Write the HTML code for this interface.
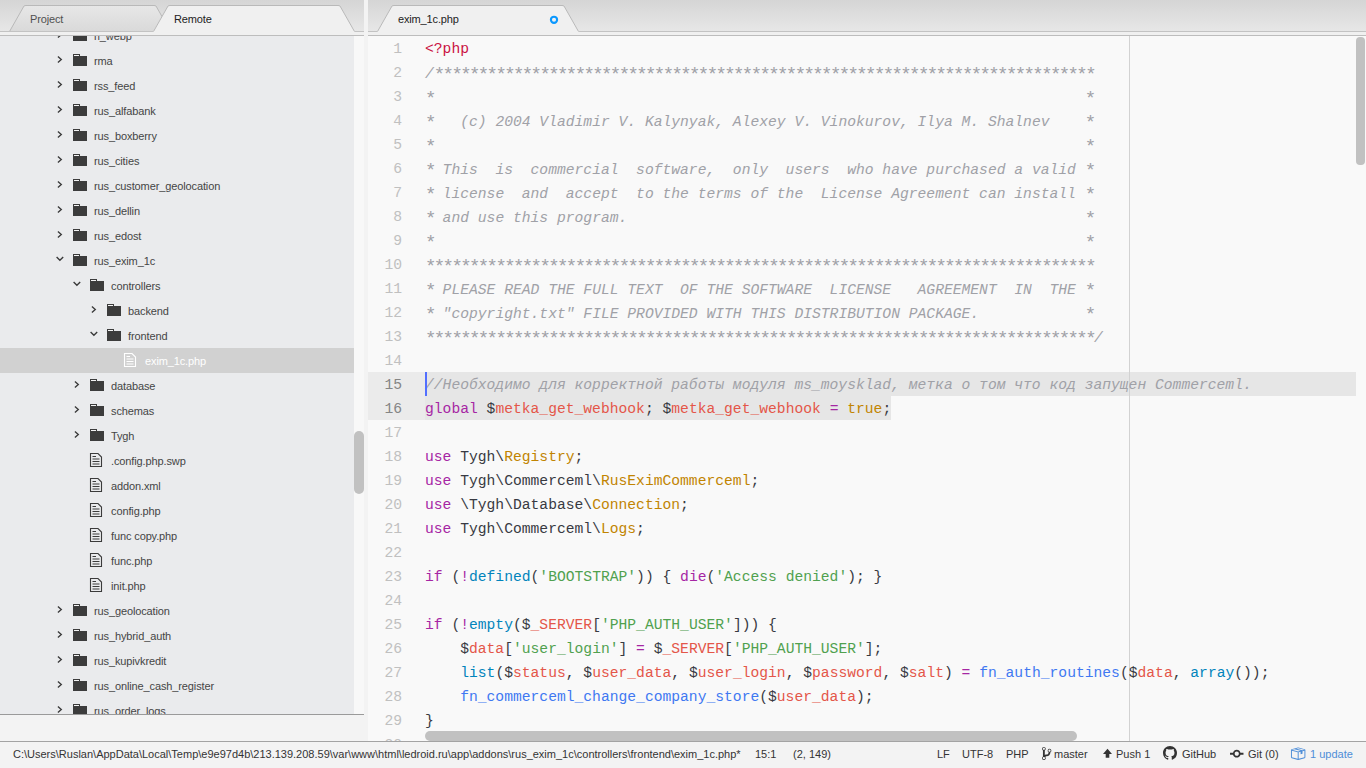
<!DOCTYPE html><html><head><meta charset="utf-8"><style>
*{margin:0;padding:0;box-sizing:border-box}
html,body{width:1366px;height:768px;overflow:hidden;background:#f3f3f3;font-family:"Liberation Sans",sans-serif}
.tabbar{position:absolute;top:0;height:36px;background:linear-gradient(#d5d5d5,#e7e7e7 31px);overflow:hidden}
.tabbar .bl{position:absolute;left:0;right:0;top:31px;height:1px;background:#c3c3c3}
.tabbar .strip{position:absolute;left:0;right:0;top:32px;height:3px;background:#f0f0f0}
.tabbar .bb{position:absolute;left:0;right:0;top:35px;height:1px;background:#bdbdbd}
svg{position:absolute;overflow:visible}
.tt{position:absolute;top:13px;font-size:11px;line-height:13px;color:#222;white-space:pre;letter-spacing:-0.15px}
#tree{position:absolute;left:0;top:36px;width:354px;height:678px;background:#eaebed;overflow:hidden}
.row{position:absolute;left:0;width:354px;height:25px;font-size:11px;color:#454545;white-space:pre}
.row .n{position:absolute;top:7px;line-height:13px;letter-spacing:-0.12px}
.row.sel{background:#d1d1d1;color:#fff}
#tscroll{position:absolute;left:354px;top:36px;width:10px;height:678px;background:#f8f8f8}
#tthumb{position:absolute;left:354.2px;top:430.5px;width:9.4px;height:63px;background:#c1c1c1;border-radius:5px}
#tbot{position:absolute;left:0;top:714px;width:364px;height:1px;background:#9a9a9a}
#divider{position:absolute;left:364px;top:0;width:4px;height:741px;background:#f3f3f3}
#editor{position:absolute;left:368px;top:36px;width:998px;height:705px;background:#f9f9f9;overflow:hidden;font-family:"Liberation Mono",monospace;font-size:14.667px}
.ln{position:absolute;left:0;width:34px;text-align:right;height:24px;line-height:24px;color:#c0c0c0}
.ln.hl{color:#858585}
.cl{position:absolute;left:57px;height:24px;line-height:24px;white-space:pre;color:#383a42}
.c{color:#a0a1a7;font-style:italic}
.ast{font-size:19px;letter-spacing:-2.6px;position:relative;top:2px;font-style:normal;margin-left:0px}
.k{color:#a626a4}
.v{color:#e45649}
.s{color:#50a14f}
.f{color:#4078f2}
.b{color:#0184bc}
.o{color:#c18401}
.p{color:#ca1243}
#status{position:absolute;left:0;top:741px;width:1366px;height:27px;background:#f3f3f3;border-top:1px solid #a3a3a3;font-size:11px;color:#333;white-space:pre}
#status .si{position:absolute;top:6px;line-height:13px;letter-spacing:0px}
</style></head><body>
<div class="tabbar" style="left:0;width:364px"><div class="bl"></div><div class="strip"></div><div class="bb"></div>
<svg width="364" height="36" style="left:0;top:0"><defs><linearGradient id="gp" x1="0" y1="0" x2="0" y2="1"><stop offset="0" stop-color="#e7e7e7"/><stop offset="1" stop-color="#d9d9d9"/></linearGradient></defs><path d="M8.9,32 L24,6 Q24.8,5.5 26,5.5 L154,5.5 Q155.2,5.5 156,6 L171.1,32 Z" fill="url(#gp)" stroke="none"/><path d="M9.5,31.5 L24,6 Q24.8,5.5 26,5.5 L154,5.5 Q155.2,5.5 156,6 L170.5,31.5" fill="none" stroke="#b9b9b9" stroke-width="1"/><rect x="0" y="31" width="364" height="1" fill="#c3c3c3"/><path d="M152.9,32 L168,6 Q168.8,5.5 170,5.5 L338,5.5 Q339.2,5.5 340,6 L355.1,32 Z" fill="#f0f0f0" stroke="none"/><path d="M153.5,31.5 L168,6 Q168.8,5.5 170,5.5 L338,5.5 Q339.2,5.5 340,6 L354.5,31.5" fill="none" stroke="#b9b9b9" stroke-width="1"/></svg>
<div class="tt" style="left:30px;color:#505050">Project</div>
<div class="tt" style="left:174px">Remote</div>
</div>
<div id="divider"></div>
<div class="tabbar" style="left:368px;width:998px"><div class="bl"></div><div class="strip"></div><div class="bb"></div>
<svg width="998" height="36" style="left:0;top:0"><path d="M8.9,32 L24,6 Q24.8,5.5 26,5.5 L194,5.5 Q195.2,5.5 196,6 L211.1,32 Z" fill="#f0f0f0" stroke="none"/><path d="M9.5,31.5 L24,6 Q24.8,5.5 26,5.5 L194,5.5 Q195.2,5.5 196,6 L210.5,31.5" fill="none" stroke="#b9b9b9" stroke-width="1"/><circle cx="186" cy="19.8" r="3.1" fill="none" stroke="#0a98ff" stroke-width="2.1"/></svg>
<div class="tt" style="left:30px">exim_1c.php</div>
</div>
<div id="tree">
<div class="row" style="top:-13px">
<svg width="10" height="10" style="left:57px;top:8px"><path d="M0.9,0.6 L4.3,3.6 L0.9,6.6" fill="none" stroke="#3a3a3a" stroke-width="1.35"/></svg>
<svg width="14" height="12" style="left:73px;top:6px"><path d="M0,2 H14 V12 H0 Z M0,0 H7 V2 H0 Z" fill="#3c3c3c"/><rect x="1" y="1" width="5" height="1" fill="#f4f4f4"/></svg>
<span class="n" style="left:94px">ri_webp</span></div>
<div class="row" style="top:12px">
<svg width="10" height="10" style="left:57px;top:8px"><path d="M0.9,0.6 L4.3,3.6 L0.9,6.6" fill="none" stroke="#3a3a3a" stroke-width="1.35"/></svg>
<svg width="14" height="12" style="left:73px;top:6px"><path d="M0,2 H14 V12 H0 Z M0,0 H7 V2 H0 Z" fill="#3c3c3c"/><rect x="1" y="1" width="5" height="1" fill="#f4f4f4"/></svg>
<span class="n" style="left:94px">rma</span></div>
<div class="row" style="top:37px">
<svg width="10" height="10" style="left:57px;top:8px"><path d="M0.9,0.6 L4.3,3.6 L0.9,6.6" fill="none" stroke="#3a3a3a" stroke-width="1.35"/></svg>
<svg width="14" height="12" style="left:73px;top:6px"><path d="M0,2 H14 V12 H0 Z M0,0 H7 V2 H0 Z" fill="#3c3c3c"/><rect x="1" y="1" width="5" height="1" fill="#f4f4f4"/></svg>
<span class="n" style="left:94px">rss_feed</span></div>
<div class="row" style="top:62px">
<svg width="10" height="10" style="left:57px;top:8px"><path d="M0.9,0.6 L4.3,3.6 L0.9,6.6" fill="none" stroke="#3a3a3a" stroke-width="1.35"/></svg>
<svg width="14" height="12" style="left:73px;top:6px"><path d="M0,2 H14 V12 H0 Z M0,0 H7 V2 H0 Z" fill="#3c3c3c"/><rect x="1" y="1" width="5" height="1" fill="#f4f4f4"/></svg>
<span class="n" style="left:94px">rus_alfabank</span></div>
<div class="row" style="top:87px">
<svg width="10" height="10" style="left:57px;top:8px"><path d="M0.9,0.6 L4.3,3.6 L0.9,6.6" fill="none" stroke="#3a3a3a" stroke-width="1.35"/></svg>
<svg width="14" height="12" style="left:73px;top:6px"><path d="M0,2 H14 V12 H0 Z M0,0 H7 V2 H0 Z" fill="#3c3c3c"/><rect x="1" y="1" width="5" height="1" fill="#f4f4f4"/></svg>
<span class="n" style="left:94px">rus_boxberry</span></div>
<div class="row" style="top:112px">
<svg width="10" height="10" style="left:57px;top:8px"><path d="M0.9,0.6 L4.3,3.6 L0.9,6.6" fill="none" stroke="#3a3a3a" stroke-width="1.35"/></svg>
<svg width="14" height="12" style="left:73px;top:6px"><path d="M0,2 H14 V12 H0 Z M0,0 H7 V2 H0 Z" fill="#3c3c3c"/><rect x="1" y="1" width="5" height="1" fill="#f4f4f4"/></svg>
<span class="n" style="left:94px">rus_cities</span></div>
<div class="row" style="top:137px">
<svg width="10" height="10" style="left:57px;top:8px"><path d="M0.9,0.6 L4.3,3.6 L0.9,6.6" fill="none" stroke="#3a3a3a" stroke-width="1.35"/></svg>
<svg width="14" height="12" style="left:73px;top:6px"><path d="M0,2 H14 V12 H0 Z M0,0 H7 V2 H0 Z" fill="#3c3c3c"/><rect x="1" y="1" width="5" height="1" fill="#f4f4f4"/></svg>
<span class="n" style="left:94px">rus_customer_geolocation</span></div>
<div class="row" style="top:162px">
<svg width="10" height="10" style="left:57px;top:8px"><path d="M0.9,0.6 L4.3,3.6 L0.9,6.6" fill="none" stroke="#3a3a3a" stroke-width="1.35"/></svg>
<svg width="14" height="12" style="left:73px;top:6px"><path d="M0,2 H14 V12 H0 Z M0,0 H7 V2 H0 Z" fill="#3c3c3c"/><rect x="1" y="1" width="5" height="1" fill="#f4f4f4"/></svg>
<span class="n" style="left:94px">rus_dellin</span></div>
<div class="row" style="top:187px">
<svg width="10" height="10" style="left:57px;top:8px"><path d="M0.9,0.6 L4.3,3.6 L0.9,6.6" fill="none" stroke="#3a3a3a" stroke-width="1.35"/></svg>
<svg width="14" height="12" style="left:73px;top:6px"><path d="M0,2 H14 V12 H0 Z M0,0 H7 V2 H0 Z" fill="#3c3c3c"/><rect x="1" y="1" width="5" height="1" fill="#f4f4f4"/></svg>
<span class="n" style="left:94px">rus_edost</span></div>
<div class="row" style="top:212px">
<svg width="10" height="10" style="left:56px;top:8px"><path d="M0.6,1 L3.9,4.3 L7.2,1" fill="none" stroke="#3a3a3a" stroke-width="1.35"/></svg>
<svg width="14" height="12" style="left:73px;top:6px"><path d="M0,2 H14 V12 H0 Z M0,0 H7 V2 H0 Z" fill="#3c3c3c"/><rect x="1" y="1" width="5" height="1" fill="#f4f4f4"/></svg>
<span class="n" style="left:94px">rus_exim_1c</span></div>
<div class="row" style="top:237px">
<svg width="10" height="10" style="left:73px;top:8px"><path d="M0.6,1 L3.9,4.3 L7.2,1" fill="none" stroke="#3a3a3a" stroke-width="1.35"/></svg>
<svg width="14" height="12" style="left:90px;top:6px"><path d="M0,2 H14 V12 H0 Z M0,0 H7 V2 H0 Z" fill="#3c3c3c"/><rect x="1" y="1" width="5" height="1" fill="#f4f4f4"/></svg>
<span class="n" style="left:111px">controllers</span></div>
<div class="row" style="top:262px">
<svg width="10" height="10" style="left:91px;top:8px"><path d="M0.9,0.6 L4.3,3.6 L0.9,6.6" fill="none" stroke="#3a3a3a" stroke-width="1.35"/></svg>
<svg width="14" height="12" style="left:107px;top:6px"><path d="M0,2 H14 V12 H0 Z M0,0 H7 V2 H0 Z" fill="#3c3c3c"/><rect x="1" y="1" width="5" height="1" fill="#f4f4f4"/></svg>
<span class="n" style="left:128px">backend</span></div>
<div class="row" style="top:287px">
<svg width="10" height="10" style="left:90px;top:8px"><path d="M0.6,1 L3.9,4.3 L7.2,1" fill="none" stroke="#3a3a3a" stroke-width="1.35"/></svg>
<svg width="14" height="12" style="left:107px;top:6px"><path d="M0,2 H14 V12 H0 Z M0,0 H7 V2 H0 Z" fill="#3c3c3c"/><rect x="1" y="1" width="5" height="1" fill="#f4f4f4"/></svg>
<span class="n" style="left:128px">frontend</span></div>
<div class="row sel" style="top:312px">
<svg width="13" height="14" style="left:124px;top:5px"><path d="M0.5,0.5 H8 L11.5,4 V13.5 H0.5 Z" fill="none" stroke="#fff" stroke-width="1.1"/><path d="M2.5,3.5 H6 M2.5,6 H9.5 M2.5,8.5 H9.5 M2.5,11 H9.5" stroke="#fff" stroke-width="1"/></svg>
<span class="n" style="left:145px">exim_1c.php</span></div>
<div class="row" style="top:337px">
<svg width="10" height="10" style="left:74px;top:8px"><path d="M0.9,0.6 L4.3,3.6 L0.9,6.6" fill="none" stroke="#3a3a3a" stroke-width="1.35"/></svg>
<svg width="14" height="12" style="left:90px;top:6px"><path d="M0,2 H14 V12 H0 Z M0,0 H7 V2 H0 Z" fill="#3c3c3c"/><rect x="1" y="1" width="5" height="1" fill="#f4f4f4"/></svg>
<span class="n" style="left:111px">database</span></div>
<div class="row" style="top:362px">
<svg width="10" height="10" style="left:74px;top:8px"><path d="M0.9,0.6 L4.3,3.6 L0.9,6.6" fill="none" stroke="#3a3a3a" stroke-width="1.35"/></svg>
<svg width="14" height="12" style="left:90px;top:6px"><path d="M0,2 H14 V12 H0 Z M0,0 H7 V2 H0 Z" fill="#3c3c3c"/><rect x="1" y="1" width="5" height="1" fill="#f4f4f4"/></svg>
<span class="n" style="left:111px">schemas</span></div>
<div class="row" style="top:387px">
<svg width="10" height="10" style="left:74px;top:8px"><path d="M0.9,0.6 L4.3,3.6 L0.9,6.6" fill="none" stroke="#3a3a3a" stroke-width="1.35"/></svg>
<svg width="14" height="12" style="left:90px;top:6px"><path d="M0,2 H14 V12 H0 Z M0,0 H7 V2 H0 Z" fill="#3c3c3c"/><rect x="1" y="1" width="5" height="1" fill="#f4f4f4"/></svg>
<span class="n" style="left:111px">Tygh</span></div>
<div class="row" style="top:412px">
<svg width="13" height="14" style="left:90px;top:5px"><path d="M0.5,0.5 H8 L11.5,4 V13.5 H0.5 Z" fill="none" stroke="#3b3b3b" stroke-width="1.1"/><path d="M2.5,3.5 H6 M2.5,6 H9.5 M2.5,8.5 H9.5 M2.5,11 H9.5" stroke="#3b3b3b" stroke-width="1"/></svg>
<span class="n" style="left:111px">.config.php.swp</span></div>
<div class="row" style="top:437px">
<svg width="13" height="14" style="left:90px;top:5px"><path d="M0.5,0.5 H8 L11.5,4 V13.5 H0.5 Z" fill="none" stroke="#3b3b3b" stroke-width="1.1"/><path d="M2.5,3.5 H6 M2.5,6 H9.5 M2.5,8.5 H9.5 M2.5,11 H9.5" stroke="#3b3b3b" stroke-width="1"/></svg>
<span class="n" style="left:111px">addon.xml</span></div>
<div class="row" style="top:462px">
<svg width="13" height="14" style="left:90px;top:5px"><path d="M0.5,0.5 H8 L11.5,4 V13.5 H0.5 Z" fill="none" stroke="#3b3b3b" stroke-width="1.1"/><path d="M2.5,3.5 H6 M2.5,6 H9.5 M2.5,8.5 H9.5 M2.5,11 H9.5" stroke="#3b3b3b" stroke-width="1"/></svg>
<span class="n" style="left:111px">config.php</span></div>
<div class="row" style="top:487px">
<svg width="13" height="14" style="left:90px;top:5px"><path d="M0.5,0.5 H8 L11.5,4 V13.5 H0.5 Z" fill="none" stroke="#3b3b3b" stroke-width="1.1"/><path d="M2.5,3.5 H6 M2.5,6 H9.5 M2.5,8.5 H9.5 M2.5,11 H9.5" stroke="#3b3b3b" stroke-width="1"/></svg>
<span class="n" style="left:111px">func copy.php</span></div>
<div class="row" style="top:512px">
<svg width="13" height="14" style="left:90px;top:5px"><path d="M0.5,0.5 H8 L11.5,4 V13.5 H0.5 Z" fill="none" stroke="#3b3b3b" stroke-width="1.1"/><path d="M2.5,3.5 H6 M2.5,6 H9.5 M2.5,8.5 H9.5 M2.5,11 H9.5" stroke="#3b3b3b" stroke-width="1"/></svg>
<span class="n" style="left:111px">func.php</span></div>
<div class="row" style="top:537px">
<svg width="13" height="14" style="left:90px;top:5px"><path d="M0.5,0.5 H8 L11.5,4 V13.5 H0.5 Z" fill="none" stroke="#3b3b3b" stroke-width="1.1"/><path d="M2.5,3.5 H6 M2.5,6 H9.5 M2.5,8.5 H9.5 M2.5,11 H9.5" stroke="#3b3b3b" stroke-width="1"/></svg>
<span class="n" style="left:111px">init.php</span></div>
<div class="row" style="top:562px">
<svg width="10" height="10" style="left:57px;top:8px"><path d="M0.9,0.6 L4.3,3.6 L0.9,6.6" fill="none" stroke="#3a3a3a" stroke-width="1.35"/></svg>
<svg width="14" height="12" style="left:73px;top:6px"><path d="M0,2 H14 V12 H0 Z M0,0 H7 V2 H0 Z" fill="#3c3c3c"/><rect x="1" y="1" width="5" height="1" fill="#f4f4f4"/></svg>
<span class="n" style="left:94px">rus_geolocation</span></div>
<div class="row" style="top:587px">
<svg width="10" height="10" style="left:57px;top:8px"><path d="M0.9,0.6 L4.3,3.6 L0.9,6.6" fill="none" stroke="#3a3a3a" stroke-width="1.35"/></svg>
<svg width="14" height="12" style="left:73px;top:6px"><path d="M0,2 H14 V12 H0 Z M0,0 H7 V2 H0 Z" fill="#3c3c3c"/><rect x="1" y="1" width="5" height="1" fill="#f4f4f4"/></svg>
<span class="n" style="left:94px">rus_hybrid_auth</span></div>
<div class="row" style="top:612px">
<svg width="10" height="10" style="left:57px;top:8px"><path d="M0.9,0.6 L4.3,3.6 L0.9,6.6" fill="none" stroke="#3a3a3a" stroke-width="1.35"/></svg>
<svg width="14" height="12" style="left:73px;top:6px"><path d="M0,2 H14 V12 H0 Z M0,0 H7 V2 H0 Z" fill="#3c3c3c"/><rect x="1" y="1" width="5" height="1" fill="#f4f4f4"/></svg>
<span class="n" style="left:94px">rus_kupivkredit</span></div>
<div class="row" style="top:637px">
<svg width="10" height="10" style="left:57px;top:8px"><path d="M0.9,0.6 L4.3,3.6 L0.9,6.6" fill="none" stroke="#3a3a3a" stroke-width="1.35"/></svg>
<svg width="14" height="12" style="left:73px;top:6px"><path d="M0,2 H14 V12 H0 Z M0,0 H7 V2 H0 Z" fill="#3c3c3c"/><rect x="1" y="1" width="5" height="1" fill="#f4f4f4"/></svg>
<span class="n" style="left:94px">rus_online_cash_register</span></div>
<div class="row" style="top:662px">
<svg width="10" height="10" style="left:57px;top:8px"><path d="M0.9,0.6 L4.3,3.6 L0.9,6.6" fill="none" stroke="#3a3a3a" stroke-width="1.35"/></svg>
<svg width="14" height="12" style="left:73px;top:6px"><path d="M0,2 H14 V12 H0 Z M0,0 H7 V2 H0 Z" fill="#3c3c3c"/><rect x="1" y="1" width="5" height="1" fill="#f4f4f4"/></svg>
<span class="n" style="left:94px">rus_order_logs</span></div>
</div>
<div id="tscroll"></div><div id="tthumb"></div><div id="tbot"></div>
<div id="editor">
<div style="position:absolute;left:0;top:336px;width:57px;height:48px;background:#ebebeb"></div>
<div style="position:absolute;left:57px;top:336px;width:931px;height:24px;background:#e6e6e6"></div>
<div style="position:absolute;left:57px;top:360px;width:466.4px;height:24px;background:#e6e6e6"></div>
<div style="position:absolute;left:761px;top:0;width:1px;height:705px;background:#d2d2d2"></div>
<div class="ln" style="top:1px">1</div>
<div class="cl" style="top:1px"><span class="p">&lt;?php</span></div>
<div class="ln" style="top:25px">2</div>
<div class="cl" style="top:25px"><span class="c">/<span class="ast">***************************************************************************</span></span></div>
<div class="ln" style="top:49px">3</div>
<div class="cl" style="top:49px"><span class="c"><span class="ast">*</span>                                                                          <span class="ast">*</span></span></div>
<div class="ln" style="top:73px">4</div>
<div class="cl" style="top:73px"><span class="c"><span class="ast">*</span>   (c) 2004 Vladimir V. Kalynyak, Alexey V. Vinokurov, Ilya M. Shalnev    <span class="ast">*</span></span></div>
<div class="ln" style="top:97px">5</div>
<div class="cl" style="top:97px"><span class="c"><span class="ast">*</span>                                                                          <span class="ast">*</span></span></div>
<div class="ln" style="top:121px">6</div>
<div class="cl" style="top:121px"><span class="c"><span class="ast">*</span> This  is  commercial  software,  only  users  who have purchased a valid <span class="ast">*</span></span></div>
<div class="ln" style="top:145px">7</div>
<div class="cl" style="top:145px"><span class="c"><span class="ast">*</span> license  and  accept  to the terms of the  License Agreement can install <span class="ast">*</span></span></div>
<div class="ln" style="top:169px">8</div>
<div class="cl" style="top:169px"><span class="c"><span class="ast">*</span> and use this program.                                                    <span class="ast">*</span></span></div>
<div class="ln" style="top:193px">9</div>
<div class="cl" style="top:193px"><span class="c"><span class="ast">*</span>                                                                          <span class="ast">*</span></span></div>
<div class="ln" style="top:217px">10</div>
<div class="cl" style="top:217px"><span class="c"><span class="ast">****************************************************************************</span></span></div>
<div class="ln" style="top:241px">11</div>
<div class="cl" style="top:241px"><span class="c"><span class="ast">*</span> PLEASE READ THE FULL TEXT  OF THE SOFTWARE  LICENSE   AGREEMENT  IN  THE <span class="ast">*</span></span></div>
<div class="ln" style="top:265px">12</div>
<div class="cl" style="top:265px"><span class="c"><span class="ast">*</span> &quot;copyright.txt&quot; FILE PROVIDED WITH THIS DISTRIBUTION PACKAGE.            <span class="ast">*</span></span></div>
<div class="ln" style="top:289px">13</div>
<div class="cl" style="top:289px"><span class="c"><span class="ast">****************************************************************************</span>/</span></div>
<div class="ln" style="top:313px">14</div>
<div class="ln hl" style="top:337px">15</div>
<div class="cl" style="top:337px"><span class="c">//Необходимо для корректной работы модуля ms_moysklad, метка о том что код запущен Commerceml.</span></div>
<div class="ln hl" style="top:361px">16</div>
<div class="cl" style="top:361px"><span class="k">global</span> $<span class="v">metka_get_webhook</span>; $<span class="v">metka_get_webhook</span> <span class="k">=</span> <span class="o">true</span>;</div>
<div class="ln" style="top:385px">17</div>
<div class="ln" style="top:409px">18</div>
<div class="cl" style="top:409px"><span class="k">use</span> Tygh\<span class="o">Registry</span>;</div>
<div class="ln" style="top:433px">19</div>
<div class="cl" style="top:433px"><span class="k">use</span> Tygh\Commerceml\<span class="o">RusEximCommerceml</span>;</div>
<div class="ln" style="top:457px">20</div>
<div class="cl" style="top:457px"><span class="k">use</span> \Tygh\Database\<span class="o">Connection</span>;</div>
<div class="ln" style="top:481px">21</div>
<div class="cl" style="top:481px"><span class="k">use</span> Tygh\Commerceml\<span class="o">Logs</span>;</div>
<div class="ln" style="top:505px">22</div>
<div class="ln" style="top:529px">23</div>
<div class="cl" style="top:529px"><span class="k">if</span> (<span class="k">!</span><span class="b">defined</span>(<span class="s">&#x27;BOOTSTRAP&#x27;</span>)) { <span class="k">die</span>(<span class="s">&#x27;Access denied&#x27;</span>); }</div>
<div class="ln" style="top:553px">24</div>
<div class="ln" style="top:577px">25</div>
<div class="cl" style="top:577px"><span class="k">if</span> (<span class="k">!</span><span class="b">empty</span>($<span class="v">_SERVER</span>[<span class="s">&#x27;PHP_AUTH_USER&#x27;</span>])) {</div>
<div class="ln" style="top:601px">26</div>
<div class="cl" style="top:601px">    $<span class="v">data</span>[<span class="s">&#x27;user_login&#x27;</span>] <span class="k">=</span> $<span class="v">_SERVER</span>[<span class="s">&#x27;PHP_AUTH_USER&#x27;</span>];</div>
<div class="ln" style="top:625px">27</div>
<div class="cl" style="top:625px">    <span class="b">list</span>($<span class="v">status</span>, $<span class="v">user_data</span>, $<span class="v">user_login</span>, $<span class="v">password</span>, $<span class="v">salt</span>) <span class="k">=</span> <span class="f">fn_auth_routines</span>($<span class="v">data</span>, <span class="b">array</span>());</div>
<div class="ln" style="top:649px">28</div>
<div class="cl" style="top:649px">    <span class="f">fn_commerceml_change_company_store</span>($<span class="v">user_data</span>);</div>
<div class="ln" style="top:673px">29</div>
<div class="cl" style="top:673px">}</div>
<div class="ln" style="top:697px">30</div>
<div style="position:absolute;left:57px;top:336px;width:2px;height:24px;background:#526fff"></div>
<div style="position:absolute;left:57px;top:695px;width:652px;height:9.5px;background:#c1c1c1;border-radius:5px"></div>
<div style="position:absolute;left:988px;top:1px;width:9px;height:128px;background:#c1c1c1;border-radius:4px"></div>
</div>
<div id="status">
<span class="si" style="left:13px">C:\Users\Ruslan\AppData\Local\Temp\e9e97d4b\213.139.208.59\var\www\html\ledroid.ru\app\addons\rus_exim_1c\controllers\frontend\exim_1c.php*</span>
<span class="si" style="left:755px">15:1</span>
<span class="si" style="left:793px">(2, 149)</span>
<span class="si" style="left:937px">LF</span>
<span class="si" style="left:962px">UTF-8</span>
<span class="si" style="left:1006px">PHP</span>
<span class="si" style="left:1054px">master</span>
<span class="si" style="left:1116px">Push 1</span>
<span class="si" style="left:1182px">GitHub</span>
<span class="si" style="left:1248px">Git (0)</span>
<span class="si" style="left:1310px;color:#4e8ed8">1 update</span>
<svg width="10" height="16" viewBox="0 0 10 16" style="left:1042px;top:3.5px;width:9.4px;height:15px"><path fill="#333" d="M10 5c0-1.11-.89-2-2-2a1.993 1.993 0 0 0-1 3.72v.3c-.02.52-.23.98-.63 1.38-.4.4-.86.61-1.380.63-.83.02-1.48.16-2 .45V4.72a1.993 1.993 0 0 0 1-1.720c0-1.11-.89-2-2-2S0 1.89 0 3c0 .73.41 1.38 1 1.72v6.56c-.59.35-1 .99-1 1.720 0 1.11.89 2 2 2 1.11 0 2-.89 2-2 0-.53-.2-1-.53-1.36.09-.06.48-.41.59-.47.25-.11.56-.17.94-.17 1.05-.05 1.950-.45 2.75-1.25S8.95 7.77 9 6.73h-.02C9.59 6.37 10 5.73 10 5zM2 1.8c.66 0 1.2.55 1.2 1.2 0 .65-.55 1.2-1.2 1.2C1.35 4.2.8 3.65.8 3c0-.65.55-1.2 1.2-1.2zm0 12.41c-.66 0-1.2-.55-1.2-1.2 0-.65.55-1.2 1.2-1.2.65 0 1.2.55 1.2 1.2 0 .65-.55 1.2-1.2 1.2zm6-8c-.66 0-1.2-.55-1.2-1.2 0-.65.55-1.2 1.2-1.2.65 0 1.2.55 1.2 1.2 0 .65-.55 1.2-1.2 1.2z"/></svg>
<svg width="10" height="16" viewBox="0 0 10 16" style="left:1102.5px;top:4px;width:9px;height:14.4px"><path fill="#333" d="M5 3L0 9h3v4h4V9h3L5 3z"/></svg>
<svg width="16" height="16" viewBox="0 0 16 16" style="left:1163px;top:4px;width:14px;height:14px"><path fill="#333" d="M8 0C3.58 0 0 3.580 0 8c0 3.54 2.29 6.53 5.47 7.59.4.07.55-.17.55-.38 0-.19-.01-.82-.01-1.49-2.01.37-2.53-.49-2.69-.94-.09-.23-.48-.94-.82-1.13-.28-.15-.68-.52-.01-.53.63-.01 1.08.58 1.23.82.72 1.21 1.87.87 2.33.66.07-.52.28-.87.51-1.07-1.78-.2-3.64-.89-3.64-3.95 0-.87.31-1.59.82-2.15-.08-.2-.36-1.02.08-2.12 0 0 .67-.21 2.2.82.64-.18 1.32-.27 2-.27.68 0 1.36.09 2 .27 1.53-1.04 2.2-.82 2.2-.82.44 1.1.16 1.92.08 2.12.51.56.82 1.27.82 2.15 0 3.07-1.87 3.75-3.65 3.95.29.25.54.73.54 1.48 0 1.07-.01 1.93-.01 2.2 0 .21.15.46.55.38A8.013 8.013 0 0 0 16 8c0-4.42-3.58-8-8-8z"/></svg>
<svg width="14" height="16" viewBox="0 0 14 16" style="left:1230px;top:3.5px;width:13.5px;height:15.4px"><path fill="#333" d="M10.86 7c-.45-1.72-2-3-3.86-3-1.86 0-3.41 1.28-3.860 3H0v2h3.14c.45 1.72 2 3 3.86 3 1.86 0 3.41-1.28 3.86-3H14V7h-3.14zM7 10.2c-1.22 0-2.2-.98-2.2-2.2 0-1.22.98-2.2 2.2-2.2 1.22 0 2.2.98 2.2 2.2 0 1.22-.98 2.2-2.2 2.2z"/></svg>
<svg width="16" height="16" viewBox="0 0 16 16" style="left:1290px;top:3.5px;width:15.4px;height:15.4px"><path fill="#4e8ed8" d="M1 4.27v7.47c0 .45.3.84.75.97l6.5 1.73c.16.05.34.05.5 0l6.5-1.73c.45-.13.75-.52.75-.97V4.27c0-.45-.3-.84-.75-.97l-6.5-1.74a1.4 1.4 0 0 0-.5 0L1.75 3.3c-.45.13-.75.52-.75.97zm7 9.090l-6-1.59V5l6 1.610v6.75zM2 4l2.5-.67L11 5.06l-2.5.67L2 4zm13 7.77l-6 1.59V6.61l2-.55V8.5l2-.53V5.53L15 5v6.77zm-2-7.24L6.5 2.8l2-.53L15 4l-2 .53z"/></svg>
</div>
</body></html>
